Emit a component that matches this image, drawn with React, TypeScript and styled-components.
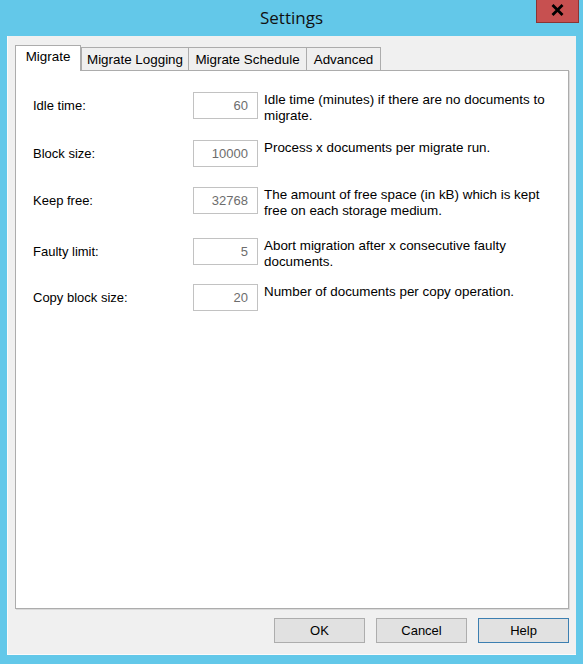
import styled, { createGlobalStyle } from "styled-components";

const GlobalStyle = createGlobalStyle`
	html, body {
		margin: 0;
		padding: 0;
		background-color: #63c8e9;
	}
	#root {
		width: 583px;
		height: 664px;
	}
`;

const tabs = ["Migrate", "Migrate Logging", "Migrate Schedule", "Advanced"];
const tabWidths = [66, 108, 119, 75];

const settings = [
	{ label: "Idle time:", value: "60", pitch: 48, text: ["Idle time (minutes) if there are no documents to", "migrate."] },
	{ label: "Block size:", value: "10000", pitch: 47, text: ["Process x documents per migrate run."] },
	{ label: "Keep free:", value: "32768", pitch: 51, text: ["The amount of free space (in kB) which is kept", "free on each storage medium."] },
	{ label: "Faulty limit:", value: "5", pitch: 46, text: ["Abort migration after x consecutive faulty", "documents."] },
	{ label: "Copy block size:", value: "20", pitch: 48, text: ["Number of documents per copy operation."] },
];

function App() {
	return (
		<>
			<GlobalStyle />
			<Window>
				<TitleBar>
					<span />
					<Title>Settings</Title>
					<CloseButton aria-label="Close">
						<svg width="13" height="12" viewBox="0 0 13 12">
							<path d="M1.5 1 L11.5 11 M11.5 1 L1.5 11" stroke="#000" strokeWidth="2.8" />
						</svg>
					</CloseButton>
				</TitleBar>
				<Client>
					<TabStrip>
						{tabs.map((t, i) => (
							<Tab key={t} $active={i === 0} $width={tabWidths[i]} $first={i === 0} $afterActive={i === 1}>
								{t}
							</Tab>
						))}
					</TabStrip>
					<Panel>
						{settings.map((s) => (
							<Row key={s.label} $pitch={s.pitch}>
								<Label>{s.label}</Label>
								<ValueBox>{s.value}</ValueBox>
								<Description>
									{s.text.map((line) => (
										<Line key={line}>{line}</Line>
									))}
								</Description>
							</Row>
						))}
					</Panel>
					<ButtonRow>
						<Button>OK</Button>
						<Button>Cancel</Button>
						<Button $default>Help</Button>
					</ButtonRow>
				</Client>
			</Window>
		</>
	);
}

export default App;

const Window = styled.div`
	display: flex;
	flex-direction: column;
	width: 583px;
	height: 664px;
	background-color: #63c8e9;
	font-family: "Liberation Sans", Arial, sans-serif;
	font-size: 13px;
	color: #000;
`;

const TitleBar = styled.div`
	display: grid;
	grid-template-columns: 1fr auto 1fr;
	align-items: start;
	height: 36px;
	flex-shrink: 0;
`;

const Title = styled.div`
	font-family: "Open Sans", "Noto Sans", sans-serif;
	font-size: 17px;
	line-height: 36px;
	color: #111;
`;

const CloseButton = styled.div`
	justify-self: end;
	display: flex;
	align-items: center;
	justify-content: center;
	width: 43px;
	height: 23px;
	margin-right: 4px;
	box-sizing: border-box;
	background-color: #c75050;
	border: 1px solid #8a3434;
	border-top: none;
	padding-bottom: 3px;
`;

const Client = styled.div`
	display: flex;
	flex-direction: column;
	flex: 1;
	margin: 0 7px 9px 7px;
	padding: 9px 7px 11px 7px;
	background-color: #f0f0f0;
	border-left: 1px solid #fbfbfb;
	border-bottom: 1px solid #fbfbfb;
	box-sizing: border-box;
`;

const TabStrip = styled.div`
	display: flex;
	align-items: flex-end;
	height: 25px;
	flex-shrink: 0;
	position: relative;
	z-index: 1;
`;

const Tab = styled.div<{ $active?: boolean; $width: number; $first?: boolean; $afterActive?: boolean }>`
	box-sizing: border-box;
	width: ${(p) => p.$width}px;
	height: ${(p) => (p.$active ? 26 : 23)}px;
	margin-bottom: ${(p) => (p.$active ? -1 : 0)}px;
	margin-left: ${(p) => (p.$first || p.$afterActive ? 0 : -1)}px;
	border: 1px solid #acacac;
	border-bottom: none;
	background-color: ${(p) => (p.$active ? "#ffffff" : "#efefef")};
	text-align: center;
	font-size: 13.4px;
	line-height: ${(p) => (p.$active ? 22 : 23)}px;
	white-space: nowrap;
`;

const Panel = styled.div`
	display: flex;
	flex-direction: column;
	flex: 1;
	background-color: #ffffff;
	border: 1px solid #acacac;
	box-shadow: 1px 1px 0 #d9d9d9;
	padding: 21px 0 0 17px;
`;

const Row = styled.div<{ $pitch: number }>`
	display: flex;
	align-items: flex-start;
	height: ${(p) => p.$pitch}px;
	flex-shrink: 0;
`;

const Label = styled.div`
	width: 160px;
	line-height: 27px;
	flex-shrink: 0;
`;

const ValueBox = styled.div`
	box-sizing: border-box;
	width: 65px;
	height: 27px;
	flex-shrink: 0;
	border: 1px solid #c2c2c2;
	background-color: #fff;
	color: #6d6d6d;
	text-align: right;
	line-height: 25px;
	padding-right: 9px;
`;

const Description = styled.div`
	display: flex;
	flex-direction: column;
	margin: 0 0 0 6px;
	font-size: 13.4px;
	line-height: 16px;
`;

const Line = styled.span`
	white-space: nowrap;
`;

const ButtonRow = styled.div`
	display: flex;
	justify-content: flex-end;
	gap: 11px;
	margin-top: 9px;
	flex-shrink: 0;
`;

const Button = styled.div<{ $default?: boolean }>`
	box-sizing: border-box;
	width: 91px;
	height: 25px;
	display: flex;
	align-items: center;
	justify-content: center;
	background-color: #e1e1e1;
	border: 1px solid ${(p) => (p.$default ? "#3c7fb1" : "#adadad")};
`;
